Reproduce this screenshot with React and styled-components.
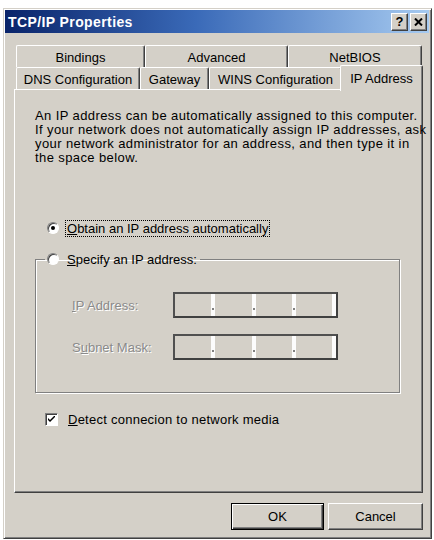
import React from "react";
import styled, { createGlobalStyle } from "styled-components";

const GlobalStyle = createGlobalStyle`
  html, body {
    margin: 0;
    padding: 0;
    background: #fff;
  }
  body {
    font-family: "Liberation Sans", Arial, sans-serif;
    font-size: 13px;
    color: #000;
  }
`;

const Page = styled.div`
  width: 434px;
  height: 540px;
  padding: 8px 0 0 3px;
  box-sizing: border-box;
  background: #fff;
`;

const Window = styled.div`
  width: 429px;
  height: 531px;
  box-sizing: border-box;
  background: #d4d0c8;
  border: 1px solid;
  border-color: #d4d0c8 #404040 #404040 #d4d0c8;
  box-shadow: inset 1px 1px 0 #fff, inset -1px -1px 0 #808080;
  padding: 1px 2px 2px 1px;
  display: flex;
  flex-direction: column;
`;

const TitleBar = styled.div`
  height: 23px;
  display: flex;
  align-items: center;
  padding: 0 2px 0 3px;
  background: linear-gradient(to right, #0a246a 0%, #3a6ab8 45%, #a6caf0 100%);
`;

const Title = styled.div`
  flex: 1;
  color: #fff;
  font-weight: bold;
  font-size: 14px;
  letter-spacing: 0.4px;
`;

const TitleButton = styled.div`
  width: 17px;
  height: 18px;
  box-sizing: border-box;
  margin-left: 2px;
  background: #d4d0c8;
  border: 1px solid;
  border-color: #fff #404040 #404040 #fff;
  box-shadow: inset -1px -1px 0 #808080;
  display: flex;
  align-items: center;
  justify-content: center;
  font-weight: bold;
  font-size: 13px;
  line-height: 1;
`;

const Body = styled.div`
  flex: 1;
  padding: 12px 0 0 9px;
  display: flex;
  flex-direction: column;
`;

const TabRow = styled.div`
  display: flex;
  margin-left: 2px;
  position: relative;
  z-index: ${(p) => p.$z};
`;

const Tab = styled.div`
  width: ${(p) => p.$w}px;
  height: ${(p) => (p.$selected ? 26 : 22)}px;
  box-sizing: border-box;
  margin: ${(p) => (p.$selected ? "-2px 0 -2px -2px" : "0")};
  padding-top: ${(p) => p.$top || 4}px;
  text-align: center;
  font-size: 13px;
  background: #d4d0c8;
  border-top: 1px solid #fff;
  border-left: 1px solid #fff;
  border-right: 1px solid #404040;
  border-radius: 2px 2px 0 0;
  box-shadow: inset -1px 0 0 #808080;
  position: relative;
  z-index: ${(p) => (p.$selected ? 2 : 0)};
`;

const Panel = styled.div`
  width: 409px;
  height: 404px;
  box-sizing: border-box;
  border: 1px solid;
  border-color: #fff #404040 #404040 #fff;
  box-shadow: inset -1px -1px 0 #808080;
  padding: 19px 20px 0 20px;
  display: flex;
  flex-direction: column;
  position: relative;
  z-index: 1;
`;

const Description = styled.p`
  margin: 0;
  line-height: 14px;
  font-size: 13px;
  letter-spacing: 0.4px;
  white-space: nowrap;
`;

const OptionRow = styled.div`
  display: flex;
  align-items: center;
  height: 16px;
  margin-top: ${(p) => p.$mt || 0}px;
  margin-left: ${(p) => p.$ml || 0}px;
`;

const Radio = styled.span`
  width: 12px;
  height: 12px;
  box-sizing: border-box;
  border-radius: 50%;
  background: #fff;
  border: 1px solid;
  border-color: #808080 #fff #fff #808080;
  box-shadow: inset 1px 1px 0 #404040;
  display: flex;
  align-items: center;
  justify-content: center;
  margin-right: 7px;
  flex-shrink: 0;
  &::after {
    content: "";
    width: 4px;
    height: 4px;
    border-radius: 50%;
    background: ${(p) => (p.$checked ? "#000" : "transparent")};
  }
`;

const Label = styled.span`
  font-size: 13px;
  padding: 0 1px;
  outline: ${(p) => (p.$focus ? "1px dotted #000" : "none")};
  outline-offset: 0;
  line-height: 15px;
  white-space: nowrap;
  letter-spacing: ${(p) => p.$ls || 0}px;
  color: ${(p) => (p.$disabled ? "#8a8a8a" : "#000")};
  text-shadow: ${(p) => (p.$disabled ? "1px 1px 0 #fff" : "none")};
`;

const GroupBox = styled.fieldset`
  width: 365px;
  box-sizing: border-box;
  margin: 15px 0 0 0;
  padding: 25px 0 32px 9px;
  border: 1px solid #808080;
  box-shadow: inset 1px 1px 0 #fff, 1px 1px 0 #fff;
  display: flex;
  flex-direction: column;
  gap: 16px;
`;

const Legend = styled.legend`
  padding: 0 2px;
  display: flex;
  align-items: center;
  height: 16px;
`;

const FieldRow = styled.div`
  display: flex;
  align-items: center;
  padding-left: 27px;
`;

const FieldLabel = styled(Label)`
  width: 101px;
  padding: 0;
`;

const IpBox = styled.div`
  width: 165px;
  height: 26px;
  box-sizing: border-box;
  border: 2px solid;
  border-color: #505050 #404040 #404040 #505050;
  background: #d4d0c8;
  display: flex;
`;

const Octet = styled.div`
  flex: 1;
`;

const Sep = styled.div`
  width: 4px;
  background: #fcfcfc;
  display: flex;
  justify-content: center;
  align-items: flex-end;
  padding-bottom: 6px;
  box-sizing: border-box;
  &::after {
    content: "";
    width: 2px;
    height: 2px;
    background: ${(p) => (p.$dot ? "#808080" : "transparent")};
  }
`;

const Check = styled.span`
  width: 13px;
  height: 13px;
  box-sizing: border-box;
  background: #fff;
  border: 1px solid;
  border-color: #808080 #fff #fff #808080;
  box-shadow: inset 1px 1px 0 #404040;
  display: flex;
  align-items: center;
  justify-content: center;
  margin-right: 9px;
`;

const Footer = styled.div`
  display: flex;
  justify-content: flex-end;
  gap: 4px;
  padding: 10px 6px 0 0;
`;

const Button = styled.div`
  width: ${(p) => p.$w}px;
  height: 27px;
  box-sizing: border-box;
  display: flex;
  align-items: center;
  justify-content: center;
  font-size: 13px;
  background: #d4d0c8;
  border: 1px solid;
  border-color: ${(p) => (p.$default ? "#000" : "#fff #404040 #404040 #fff")};
  box-shadow: ${(p) =>
    p.$default
      ? "inset 1px 1px 0 #fff, inset -1px -1px 0 #404040, inset -2px -2px 0 #808080"
      : "inset -1px -1px 0 #808080"};
`;

const IpField = () => (
  <IpBox>
    <Octet />
    <Sep $dot />
    <Octet />
    <Sep $dot />
    <Octet />
    <Sep $dot />
    <Octet />
    <Sep />
  </IpBox>
);

export default function App() {
  return (
    <Page>
      <GlobalStyle />
      <Window>
        <TitleBar>
          <Title>TCP/IP Properties</Title>
          <TitleButton>?</TitleButton>
          <TitleButton>
            <svg width="9" height="8" viewBox="0 0 9 8">
              <path d="M1 0.5 L8 7.5 M8 0.5 L1 7.5" stroke="#000" strokeWidth="2" />
            </svg>
          </TitleButton>
        </TitleBar>
        <Body>
          <TabRow $z={0}>
            <Tab $w={129}>Bindings</Tab>
            <Tab $w={143}>Advanced</Tab>
            <Tab $w={134}>NetBIOS</Tab>
          </TabRow>
          <TabRow $z={2}>
            <Tab $w={124}>DNS Configuration</Tab>
            <Tab $w={69}>Gateway</Tab>
            <Tab $w={133}>WINS Configuration</Tab>
            <Tab $w={83} $selected $top={5}>IP Address</Tab>
          </TabRow>
          <Panel>
            <Description>
              An IP address can be automatically assigned to this computer.
              <br />
              If your network does not automatically assign IP addresses, ask
              <br />
              your network administrator for an address, and then type it in
              <br />
              the space below.
            </Description>
            <OptionRow $mt={55} $ml={12}>
              <Radio $checked />
              <Label $focus>
                <u>O</u>btain an IP address automatically
              </Label>
            </OptionRow>
            <GroupBox>
              <Legend>
                <Radio />
                <Label>
                  <u>S</u>pecify an IP address:
                </Label>
              </Legend>
              <FieldRow>
                <FieldLabel $disabled>
                  <u>I</u>P Address:
                </FieldLabel>
                <IpField />
              </FieldRow>
              <FieldRow>
                <FieldLabel $disabled>
                  S<u>u</u>bnet Mask:
                </FieldLabel>
                <IpField />
              </FieldRow>
            </GroupBox>
            <OptionRow $mt={18} $ml={10}>
              <Check>
                <svg width="7" height="7" viewBox="0 0 7 7">
                  <path d="M0 2 L0 4 L2 6 L7 1 L7 -1 L2 4 Z" fill="#000" />
                </svg>
              </Check>
              <Label $ls={0.25}>
                <u>D</u>etect connecion to network media
              </Label>
            </OptionRow>
          </Panel>
          <Footer>
            <Button $w={93} $default>OK</Button>
            <Button $w={95}>Cancel</Button>
          </Footer>
        </Body>
      </Window>
    </Page>
  );
}
